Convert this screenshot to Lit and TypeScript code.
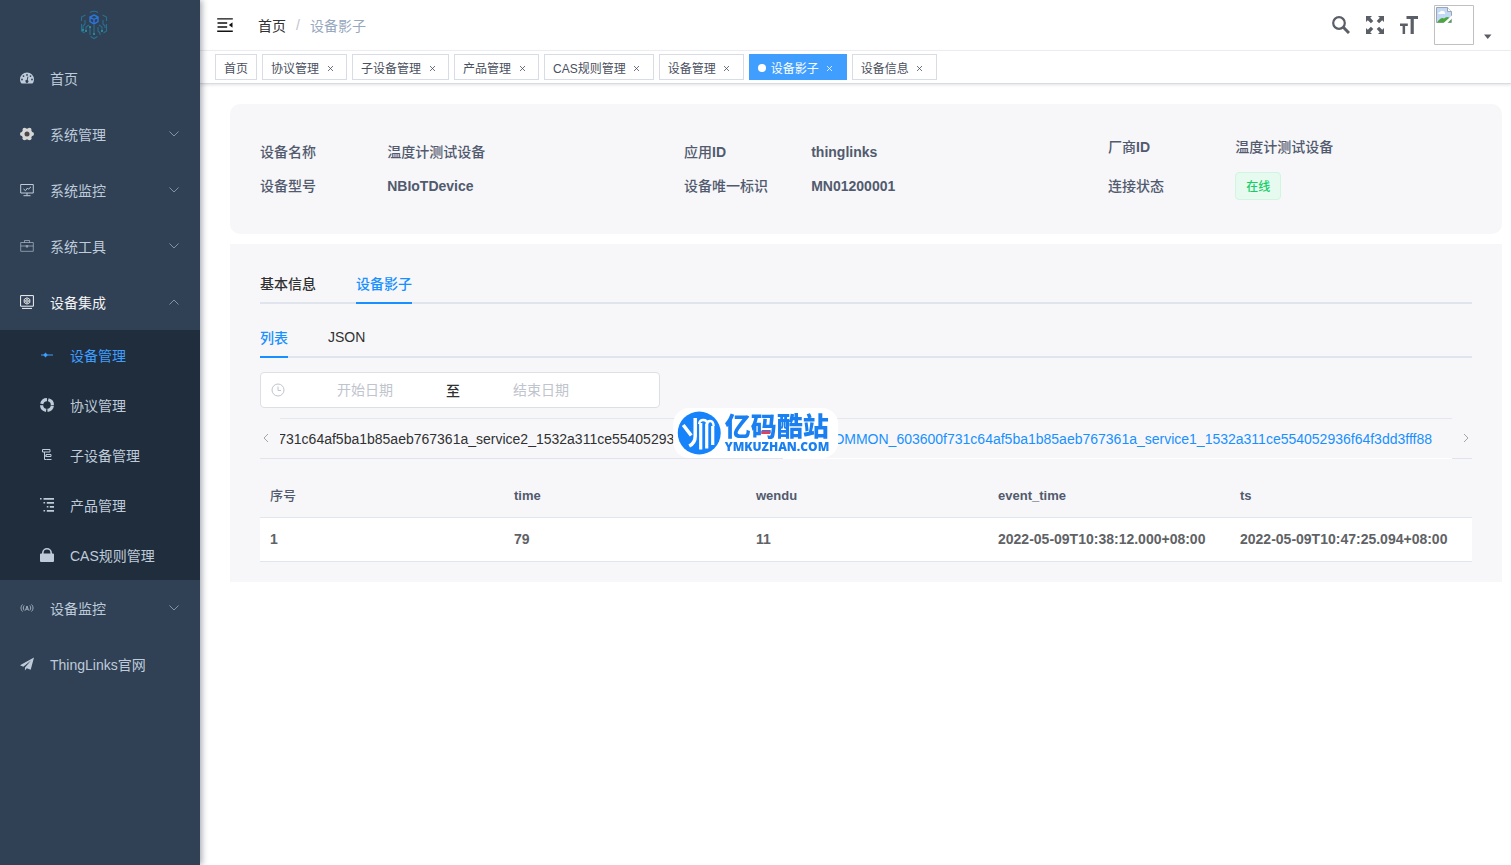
import { LitElement, html, css, svg, nothing, type TemplateResult } from "lit";
import { customElement, property } from "lit/decorators.js";
import { classMap } from "lit/directives/class-map.js";

/* ---------- icons, 14x14 grid ---------- */
const glyphs: Record<string, TemplateResult> = {
  dashboard: svg`<path fill="currentColor" fill-rule="evenodd" d="M7 1.500a7 7 0 0 0-7 7c0 1.300.3 2.500 1 3.600.2.300.5.400.8.400h10.400c.3 0 .6-.1.8-.4.7-1.100 1-2.300 1-3.600a7 7 0 0 0-7-7zM7 3a.9.9 0 1 1 0 1.800A.9.9 0 0 1 7 3zM2 7.600a.9.9 0 1 1 0 1.800.9.9 0 0 1 0-1.800zM3.500 4.200a.9.9 0 1 1 0 1.800.9.9 0 0 1 0-1.800zM12 7.600a.9.9 0 1 1 0 1.800.9.9 0 0 1 0-1.800zM10.500 4.200a.9.9 0 1 1 0 1.800.9.9 0 0 1 0-1.800zM7.500 5.600l.9.200-.7 3.200a1.500 1.500 0 1 1-.9-.200z"/>`,
  gear: svg`<g fill="#d6d6d6"><circle cx="7" cy="7" r="5.500"/><circle cx="2" cy="7" r="2"/><circle cx="12" cy="7" r="2"/><circle cx="4.500" cy="2.700" r="2"/><circle cx="9.500" cy="2.700" r="2"/><circle cx="4.500" cy="11.300" r="2"/><circle cx="9.500" cy="11.300" r="2"/></g><circle cx="7" cy="7" r="2.500" fill="#4a4a4a"/>`,
  monitor: svg`<g fill="none" stroke="currentColor"><path d="M.7 1.500h12.600v8.500H.7zM7 10v2.600M3.500 12.700h7"/><path d="m3.500 6 2 1.700L7.500 5l1 1.200L11 3.800"/></g>`,
  toolbox: svg`<g fill="none" stroke="currentColor" opacity=".6"><path d="M.7 3.500h12.600v8.800H.7zM4.500 3.500V1.500h5v2M.7 7h12.600M6.300 6v2.200h1.400V6"/></g>`,
  device: svg`<g fill="none" stroke="currentColor"><path d="M.6.6h12.800v10.600H.6zM2 13.400h10"/><path d="m7 2.800 2.800 1.600v3.100L7 9.100 4.200 7.500V4.400z"/><circle cx="7" cy="6" r="1.300"/></g>`,
  slider: svg`<path d="M1 7h12" stroke="currentColor"/><path fill="currentColor" d="m5.500 4.500 2.200 2.500-2.200 2.500-2.200-2.500z"/>`,
  ring: svg`<circle cx="7" cy="7" r="5.400" fill="none" stroke="currentColor" stroke-width="3.200" stroke-dasharray="7.080 1.400" stroke-dashoffset="-.7"/>`,
  tree: svg`<g fill="none" stroke="currentColor"><path d="M2.500 1.500h7.500v2.500H2.500zM4.500 4v7.500h2M4.500 8h2M6 6.500h5v2H6zM6.500 11.500h5"/></g>`,
  nested: svg`<path fill="currentColor" d="M0 0h1.600v1.600H0zM3.500 0H14v1.800H3.500zM3.500 4h1.600v1.600H3.500zM6.800 4H14v1.800H6.800zM6.800 8h1.600v1.600H6.800zM9.800 8H14v1.800H9.800zM3.500 12h1.600v1.600H3.500zM6.800 12H14v1.800H6.800z"/>`,
  lock: svg`<path fill="currentColor" d="M1 5.500h12a1 1 0 0 1 1 1V13a1 1 0 0 1-1 1H1a1 1 0 0 1-1-1V6.500a1 1 0 0 1 1-1z"/><path fill="none" stroke="currentColor" stroke-width="1.600" d="M2.800 6V5a4.200 4.200 0 0 1 8.400 0v1"/>`,
  signal: svg`<g fill="none" stroke="currentColor" stroke-width=".9" opacity=".85"><path d="M2.500 3.500c-2 2-2 5 0 7M4.200 4.500c-1.200 1.500-1.200 3.500 0 5M11.500 3.500c2 2 2 5 0 7M9.800 4.500c1.200 1.500 1.200 3.500 0 5M5.400 9.500 7 5l1.600 4.500M6 8.200h2"/></g>`,
  plane: svg`<path fill="currentColor" d="M14 .5 0 8.200l3.300 1.500L11 3.500 5 10.400l-.1 3.100 1.900-2.300 3.900 1.600z"/>`,
  chevron: svg`<path fill="none" stroke="currentColor" d="m2.500 4.500 4.500 4.500 4.500-4.500"/>`,
};

const icon = (name: string) => html`<svg class="icon" viewBox="0 0 14 14" aria-hidden="true">${glyphs[name]}</svg>`;

interface Entry { label: string; icon: string; open?: boolean; arrow?: boolean; active?: boolean; children?: Entry[]; }

const MENU: Entry[] = [
  { label: "首页", icon: "dashboard" },
  { label: "系统管理", icon: "gear", arrow: true },
  { label: "系统监控", icon: "monitor", arrow: true },
  { label: "系统工具", icon: "toolbox", arrow: true },
  {
    label: "设备集成", icon: "device", arrow: true, open: true,
    children: [
      { label: "设备管理", icon: "slider", active: true },
      { label: "协议管理", icon: "ring" },
      { label: "子设备管理", icon: "tree" },
      { label: "产品管理", icon: "nested" },
      { label: "CAS规则管理", icon: "lock" },
    ],
  },
  { label: "设备监控", icon: "signal", arrow: true },
  { label: "ThingLinks官网", icon: "plane" },
];

@customElement("side-menu")
export class SideMenu extends LitElement {
  static styles = css`
    :host { display: block; background: #304156; box-shadow: 2px 0 6px rgba(0, 21, 41, .35); z-index: 2; }
    .logo { height: 50px; display: flex; align-items: center; justify-content: center; padding-right: 12px; box-sizing: border-box; }
    .logo svg { width: 28px; height: 30px; }
    .list { list-style: none; margin: 0; padding: 0; }
    .entry { display: flex; align-items: center; height: 56px; padding: 0 19px 0 20px; box-sizing: border-box; color: #bfcbd9; font-size: 14px; text-decoration: none; }
    .entry .text { margin-left: 16px; flex: 1; }
    .open { color: #f4f4f5; }
    .sub { background: #1f2d3d; }
    .sub .entry { height: 50px; padding-left: 40px; }
    .sub .active { color: #409eff; }
    .icon { width: 14px; height: 14px; flex: none; }
    .arrow { display: flex; color: #8492a3; }
    .open .arrow { transform: rotate(180deg); }
  `;

  private row(e: Entry): TemplateResult {
    return html`<li>
      <a href="#" class=${classMap({ entry: true, open: !!e.open, active: !!e.active })}>
        ${icon(e.icon)}<span class="text">${e.label}</span>
        ${e.arrow ? html`<span class="arrow">${icon("chevron")}</span>` : nothing}
      </a>
      ${e.children ? html`<ul class="list sub">${e.children.map((c) => this.row(c))}</ul>` : nothing}
    </li>`;
  }

  render() {
    return html`
      <div class="logo">
        <svg viewBox="0 0 28 30" fill="none" stroke="#27708f" stroke-width="1.100" aria-label="ThingLinks">
          <path d="M10 2.500Q14 0 18 2.500M1.500 11V7l4-2M26.500 11V7l-4-2M1.500 14v7l3 2M26.500 14v7l-3 2M5 10v4l-2 2v4M23 10v4l2 2v2M6 21v-4l3-2M22 21v-4l-3-2M10 17v8M18 17v4l2 2v2M14 15v9M10.500 26.500 14 28.500l3.500-2"/>
          <path stroke="#2b74d8" stroke-width="1.400" d="m14 5 4 2v4.500l-4 2.500-4-2.500V7zM14 9.500V14M10 7l4 2.500L18 7"/>
          <g fill="#2d9aa5" stroke="none"><circle cx="6" cy="21" r="1"/><circle cx="22" cy="21" r="1"/><circle cx="10" cy="17" r="1"/><circle cx="14" cy="24" r="1"/><circle cx="3" cy="20" r="1"/></g>
        </svg>
      </div>
      <nav><ul class="list">${MENU.map((e) => this.row(e))}</ul></nav>`;
  }
}

@customElement("top-bar")
export class TopBar extends LitElement {
  static styles = css`
    :host { display: flex; align-items: center; height: 50px; padding: 0 19px 0 15px; border-bottom: 1px solid #f0f1f4; }
    button { border: 0; background: none; padding: 0; color: #5a5e66; display: flex; }
    .burger { color: #111; }
    .burger svg { width: 20px; height: 20px; transform: rotate(180deg); }
    .crumbs { display: flex; align-items: center; gap: 10px; margin-left: 23px; font-size: 14px; flex: 1; }
    .crumbs a { color: #303133; text-decoration: none; }
    .sep { color: #c0c4cc; }
    .here { color: #97a8be; }
    .tools { display: flex; gap: 16px; align-items: center; }
    .tools svg { width: 18px; height: 18px; }
    .user { display: flex; align-items: flex-end; gap: 9px; }
    .user .avatar { width: 40px; height: 40px; }
    .user .caret { width: 9px; height: 16px; }
  `;

  render() {
    return html`
      <button class="burger" aria-label="收起菜单">
        <svg viewBox="0 0 1024 1024" fill="currentColor"><path d="M408 442h480c4 0 8-4 8-8v-56c0-4-4-8-8-8H408c-4 0-8 4-8 8v56c0 4 4 8 8 8zm-8 204c0 4 4 8 8 8h480c4 0 8-4 8-8v-56c0-4-4-8-8-8H408c-4 0-8 4-8 8v56zm504-486H120c-4 0-8 4-8 8v56c0 4 4 8 8 8h784c4 0 8-4 8-8v-56c0-4-4-8-8-8zm0 632H120c-4 0-8 4-8 8v56c0 4 4 8 8 8h784c4 0 8-4 8-8v-56c0-4-4-8-8-8zM142 642 299 519a9 9 0 0 0 0-14L142 382c-6-5-14-1-14 7v246a9 9 0 0 0 14 7z"/></svg>
      </button>
      <nav class="crumbs"><a href="#">首页</a><span class="sep">/</span><span class="here">设备影子</span></nav>
      <div class="tools">
        <button aria-label="搜索"><svg viewBox="0 0 18 18" fill="none" stroke="currentColor"><circle cx="7" cy="7" r="5.800" stroke-width="2.200"/><path stroke-width="3" d="m11.300 11.300 5.700 5.700"/></svg></button>
        <button aria-label="全屏"><svg viewBox="0 0 18 18"><g fill="currentColor"><path d="M0 0h6L4.200 1.800 7.300 4.900 4.900 7.300 1.800 4.200 0 6z"/><path d="M18 0v6l-1.800-1.800-3.100 3.100-2.400-2.400 3.100-3.100L12 0z"/><path d="M0 18v-6l1.800 1.800 3.100-3.100 2.400 2.400-3.100 3.100L6 18z"/><path d="M18 18h-6l1.800-1.800-3.100-3.100 2.400-2.400 3.100 3.100L18 12z"/></g></svg></button>
        <button aria-label="字号"><svg viewBox="0 0 18 18" fill="currentColor"><path d="M6.500 0H18v3h-4.200v15h-3.200V3H6.500zM0 7.500h7.800V10H5.100v8H2.600v-8H0z"/></svg></button>
        <button class="user" aria-label="用户">
          <svg class="avatar" viewBox="0 0 40 40"><path fill="#fff" stroke="#c0c0c0" d="M.5.5h39v39H.5z"/><path fill="#c3d9f5" stroke="#9aa5b5" d="M2.500 2.500h11l4 4v11h-15z"/><path fill="#fff" stroke="#9aa5b5" d="M13.500 2.500v4h4"/><path fill="#fff" d="M4 9q0-2 2-2 1-2 3-1 2 0 2 3z"/><path fill="#4ca63f" d="M3 17.500q4-6 7-4 3-3 7 0v4z"/><path fill="#fff" d="m9 18.500 10-9v3l-6 6z"/></svg>
          <svg class="caret" viewBox="0 0 9 16"><path fill="currentColor" d="M1 5.500h7.500L4.750 10z"/></svg>
        </button>
      </div>`;
  }
}

const TAGS = ["首页", "协议管理", "子设备管理", "产品管理", "CAS规则管理", "设备管理", "设备影子", "设备信息"];

@customElement("tag-strip")
export class TagStrip extends LitElement {
  @property() current = "设备影子";
  static styles = css`
    :host { display: flex; gap: 5px; height: 33px; padding: 3px 15px; box-sizing: border-box; border-bottom: 1px solid #d8dce5; box-shadow: 0 1px 3px rgba(0, 0, 0, .12); }
    .tag { display: flex; align-items: center; height: 26px; box-sizing: border-box; padding: 0 8px; border: 1px solid #d8dce5; font-size: 12px; color: #495060; white-space: nowrap; }
    .tag a { color: inherit; text-decoration: none; }
    .close { border: 0; background: none; color: inherit; padding: 0; margin: 2px 0 0 3px; width: 16px; display: flex; justify-content: center; }
    .close svg { width: 5px; height: 5px; }
    .on { background: #409eff; border-color: #409eff; color: #fff; }
    .dot { width: 8px; height: 8px; border-radius: 50%; background: #fff; margin: 2px 5px 0 0; }
  `;
  render() {
    return TAGS.map((t, i) => html`<span class=${classMap({ tag: true, on: t === this.current })}>
      ${t === this.current ? html`<span class="dot"></span>` : nothing}<a href="#">${t}</a>
      ${i ? html`<button class="close" aria-label="关闭"><svg viewBox="0 0 5 5" stroke="currentColor" stroke-width=".8"><path d="m0 0 5 5M5 0 0 5"/></svg></button>` : nothing}
    </span>`);
  }
}

const INFO: { name: string; suffix?: string; value: string; han?: boolean; tag?: boolean }[][] = [
  [{ name: "设备名称", value: "温度计测试设备", han: true }, { name: "设备型号", value: "NBIoTDevice" }],
  [{ name: "应用", suffix: "ID", value: "thinglinks" }, { name: "设备唯一标识", value: "MN01200001" }],
  [{ name: "厂商", suffix: "ID", value: "温度计测试设备", han: true }, { name: "连接状态", value: "在线", tag: true }],
];

@customElement("device-info")
export class DeviceInfo extends LitElement {
  static styles = css`
    :host { display: grid; grid-template-columns: repeat(3, 1fr); align-items: center; height: 130px; background: #f7f7f9; border-radius: 10px; color: #515a6e; font-size: 14px; line-height: 18px; }
    .col { display: flex; flex-direction: column; gap: 16px; margin: 0; }
    .pair { display: grid; grid-template-columns: 30% 1fr; align-items: center; }
    .pair dt { margin-left: 30px; white-space: nowrap; font-weight: 500; }
    .pair dd { margin: 0 0 0 30px; font-weight: 700; }
    .pair .han { font-weight: 500; }
    .state { display: inline-block; box-sizing: border-box; height: 28px; line-height: 28px; padding: 0 10px; border: 1px solid #d0f5e0; border-radius: 4px; background: #e7faf0; color: #13ce66; font-size: 12px; font-weight: 500; vertical-align: top; }
  `;
  render() {
    return INFO.map((col) => html`<dl class="col">${col.map((p) => html`<div class="pair">
      <dt>${p.name}${p.suffix ? html`<b>${p.suffix}</b>` : nothing}</dt>
      <dd class=${classMap({ han: !!p.han })}>${p.tag ? html`<span class="state">${p.value}</span>` : p.value}</dd>
    </div>`)}</dl>`);
  }
}

const SERVICES = [
  "COMMON_603600f731c64af5ba1b85aeb767361a_service2_1532a311ce554052936f64f3dd3fff88",
  "COMMON_603600f731c64af5ba1b85aeb767361a_service1_1532a311ce554052936f64f3dd3fff88",
];
const HEAD = ["序号", "time", "wendu", "event_time", "ts"];
const ROWS = [["1", "79", "11", "2022-05-09T10:38:12.000+08:00", "2022-05-09T10:47:25.094+08:00"]];

@customElement("shadow-panel")
export class ShadowPanel extends LitElement {
  static styles = css`
    :host { display: block; background: #f7f7f9; padding: 20px 30px; font-size: 14px; color: #303133; }
    button { font: inherit; border: 0; background: none; padding: 0; color: inherit; }
    .tabs { display: flex; gap: 40px; height: 40px; box-sizing: border-box; border-bottom: 2px solid #dfe4ed; margin-bottom: 14px; font-weight: 500; }
    .tabs button { height: 40px; box-sizing: border-box; border-bottom: 2px solid transparent; }
    .tabs .on { color: #1890ff; border-color: #1890ff; }
    .range { display: flex; align-items: center; box-sizing: border-box; width: 400px; max-width: 100%; height: 36px; padding: 0 10px; background: #fff; border: 1px solid #dcdfe6; border-radius: 4px; }
    .clock { width: 14px; height: 14px; margin-right: 6px; color: #c0c4cc; }
    .range input { width: 148px; min-width: 0; height: 28px; box-sizing: border-box; border: 0; padding: 0; outline: 0; background: none; text-align: center; font: inherit; }
    .range input::placeholder { color: #c0c4cc; opacity: 1; }
    .to { width: 28px; text-align: center; font-weight: 500; }
    .services { display: flex; margin: 10px 0 15px; height: 41px; }
    .arrow { width: 20px; flex: none; display: flex; align-items: center; border-bottom: 1px solid #dfe4ed; color: #a0a5ae; }
    .arrow svg { width: 12px; height: 12px; }
    .next { justify-content: flex-end; }
    .track { flex: 1; min-width: 0; display: flex; justify-content: flex-end; overflow: hidden; border-top: 1px solid #e4e7ed; }
    .track button { flex: none; padding: 0 20px; border-bottom: 1px solid #dfe4ed; font-weight: 500; white-space: nowrap; }
    .track .on { padding-left: 40px; color: #1890ff; border-color: #fff; }
    table { width: 100%; border-collapse: collapse; table-layout: fixed; text-align: left; line-height: 23px; }
    th, td { padding: 10px; height: 23px; border-bottom: 1px solid #dfe6ec; font-weight: 700; white-space: nowrap; }
    th { color: #515a6e; font-size: 13px; }
    th.first { width: 224px; font-weight: 500; }
    td { background: #fff; color: #606266; font-size: 14px; }
  `;
  private tabs(names: string[], on: string) {
    return html`<div class="tabs" role="tablist">${names.map((n) => html`<button role="tab" class=${classMap({ on: n === on })}>${n}</button>`)}</div>`;
  }
  render() {
    return html`
      ${this.tabs(["基本信息", "设备影子"], "设备影子")}
      ${this.tabs(["列表", "JSON"], "列表")}
      <div class="range">
        <svg class="clock" viewBox="0 0 14 14" fill="none" stroke="currentColor"><circle cx="7" cy="7" r="6"/><path d="M7 3.500V7.500h3"/></svg>
        <input aria-label="开始日期" placeholder="开始日期"><span class="to">至</span><input aria-label="结束日期" placeholder="结束日期">
      </div>
      <div class="services">
        <button class="arrow" aria-label="上一个"><svg viewBox="0 0 12 12" fill="none" stroke="currentColor"><path d="M8 2 4 6l4 4"/></svg></button>
        <div class="track" role="tablist">${SERVICES.map((s, i) => html`<button role="tab" class=${classMap({ on: i === 1 })}>${s}</button>`)}</div>
        <button class="arrow next" aria-label="下一个"><svg viewBox="0 0 12 12" fill="none" stroke="currentColor"><path d="m4 2 4 4-4 4"/></svg></button>
      </div>
      <table>
        <thead><tr>${HEAD.map((h, i) => html`<th class=${classMap({ first: i === 0 })}>${h}</th>`)}</tr></thead>
        <tbody>${ROWS.map((r) => html`<tr>${r.map((c) => html`<td>${c}</td>`)}</tr>`)}</tbody>
      </table>`;
  }
}

@customElement("site-badge")
export class SiteBadge extends LitElement {
  static styles = css`
    :host { display: flex; align-items: center; gap: 4px; box-sizing: border-box; height: 50px; padding: 0 9px 0 4px; border-radius: 16px; background: #fff; color: #1a7ff0; }
    .mark { width: 44px; height: 44px; }
    .words { display: flex; flex-direction: column; }
    .name { position: relative; font-size: 26px; line-height: 28px; font-weight: 900; }
    .dash { position: absolute; left: 36px; bottom: 7px; width: 9px; height: 3px; background: #e0435c; }
    .site { font-family: "Open Sans", sans-serif; font-size: 12px; line-height: 12px; font-weight: 800; }
  `;
  render() {
    return html`
      <svg class="mark" viewBox="0 0 44 44" aria-hidden="true"><circle cx="22" cy="22" r="21.500" fill="#1683fb"/>
        <g fill="none" stroke="#fff"><path stroke-width="3.500" d="m6 14 8 10.500M18 7v18q0 7-6 10"/><path stroke-width="3.200" d="M23.500 38.500V12M29.500 37.500V12.500M35.500 34V15"/><path stroke-width="2.400" d="M22 13q0-4 4-4t4 4q0-3 3-3t3.500 5"/></g></svg>
      <span class="words"><span class="name">亿码酷站<i class="dash"></i></span><span class="site">YMKUZHAN.COM</span></span>`;
  }
}

@customElement("app-root")
export class AppRoot extends LitElement {
  static styles = css`
    :host { display: grid; grid-template-columns: 200px minmax(0, 1fr); min-height: 100vh; background: #fff; font-family: "Liberation Sans", "Noto Sans CJK SC", sans-serif; }
    .content { display: flex; flex-direction: column; gap: 10px; padding: 20px 9px 20px 30px; }
    .badge { position: fixed; left: 50%; top: 50%; transform: translate(-50%, -50%); z-index: 3; }
  `;
  render() {
    return html`
      <side-menu></side-menu>
      <main>
        <top-bar></top-bar>
        <tag-strip></tag-strip>
        <div class="content"><device-info></device-info><shadow-panel></shadow-panel></div>
      </main>
      <site-badge class="badge"></site-badge>`;
  }
}
